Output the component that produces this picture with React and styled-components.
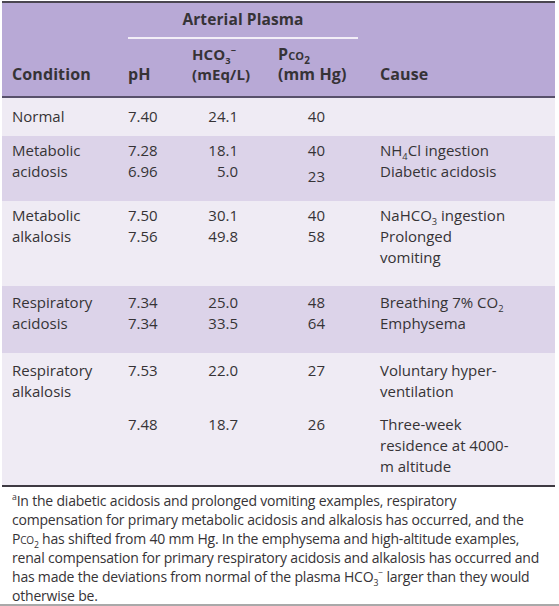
import React from 'react';
import styled, { createGlobalStyle } from 'styled-components';

const rows = [
    {
        label: ['Normal'],
        tone: 'light',
        pad: [8, 9],
        items: [{ ph: '7.40', hco: '24.1', pco: '40', cause: null }],
    },
    {
        label: ['Metabolic', 'acidosis'],
        tone: 'mid',
        pad: [4, 14],
        items: [
            { ph: '7.28', hco: '18.1', pco: '40', cause: <>NH<sub>4</sub>Cl ingestion</> },
            { ph: '6.96', hco: '5.0', pco: '23', drop: true, cause: 'Diabetic acidosis' },
        ],
    },
    {
        label: ['Metabolic', 'alkalosis'],
        tone: 'light',
        pad: [4, 18],
        items: [
            { ph: '7.50', hco: '30.1', pco: '40', cause: <>NaHCO<sub>3</sub> ingestion</> },
            { ph: '7.56', hco: '49.8', pco: '58', cause: <>Prolonged<br />vomiting</> },
        ],
    },
    {
        label: ['Respiratory', 'acidosis'],
        tone: 'mid',
        pad: [6, 19],
        items: [
            { ph: '7.34', hco: '25.0', pco: '48', cause: <>Breathing 7% CO<sub>2</sub></> },
            { ph: '7.34', hco: '33.5', pco: '64', cause: 'Emphysema' },
        ],
    },
    {
        label: ['Respiratory', 'alkalosis'],
        tone: 'light',
        pad: [7, 8],
        items: [
            { ph: '7.53', hco: '22.0', pco: '27', cause: <>Voluntary hyper-<br />ventilation</> },
            { ph: '7.48', hco: '18.7', pco: '26', spaced: true, cause: <>Three-week<br />residence at 4000-<br />m altitude</> },
        ],
    },
];

function App() {
    return (
        <>
            <Global />
            <Page>
                <Table>
                    <Head>
                        <Span>Arterial Plasma</Span>
                        <HeadCell $col={1}>Condition</HeadCell>
                        <HeadCell $col={2}>pH</HeadCell>
                        <HeadCell $col={3}>
                            HCO<sub>3</sub><sup>−</sup><br />(mEq/L)
                        </HeadCell>
                        <HeadCell $col={4}>
                            P<Sc>co</Sc><sub>2</sub><br />(mm Hg)
                        </HeadCell>
                        <HeadCell $col={5}>Cause</HeadCell>
                    </Head>
                    {rows.map((group, gi) => (
                        <Group key={gi} $tone={group.tone} $pad={group.pad}>
                            <Condition style={{ gridRow: `1 / span ${group.items.length}` }}>
                                {group.label.map((l, i) => <div key={i}>{l}</div>)}
                            </Condition>
                            {group.items.map((it, i) => (
                                <React.Fragment key={i}>
                                    <Ph $spaced={it.spaced}>{it.ph}</Ph>
                                    <Hco $spaced={it.spaced}>{it.hco}</Hco>
                                    <Pco $spaced={it.spaced} $drop={it.drop}>{it.pco}</Pco>
                                    <Cause $spaced={it.spaced}>{it.cause}</Cause>
                                </React.Fragment>
                            ))}
                        </Group>
                    ))}
                </Table>
                <Note>
                    <sup>a</sup>In the diabetic acidosis and prolonged vomiting examples, respiratory
                    compensation for primary metabolic acidosis and alkalosis has occurred, and the
                    P<Sc>co</Sc><sub>2</sub> has shifted from 40 mm Hg. In the emphysema and high-altitude examples,
                    renal compensation for primary respiratory acidosis and alkalosis has occurred and
                    has made the deviations from normal of the plasma HCO<sub>3</sub><sup>−</sup> larger than they would
                    otherwise be.
                </Note>
            </Page>
        </>
    );
}

const Global = createGlobalStyle`
    body {
        margin: 0;
        background: #fff;
        font-family: "Open Sans", "Noto Sans", sans-serif;
        color: #363336;
    }
    sub, sup {
        font-size: 0.62em;
        line-height: 0;
    }
`;

const Page = styled.div`
    width: 559px;
    height: 606px;
    box-sizing: border-box;
    padding: 0 4px 0 2px;
    border-bottom: 2px solid #a9a9a9;
    overflow: hidden;
`;

const Table = styled.div`
    border-top: 2px solid #4a4650;
    border-bottom: 2px solid #3e3a42;
    margin-top: 1px;
`;

const cols = '126px 64px 86px 102px 1fr';

const Head = styled.div`
    display: grid;
    grid-template-columns: ${cols};
    grid-template-rows: 36px auto;
    align-items: end;
    background: #b8a9d6;
    border-bottom: 2px solid #57506a;
    padding-bottom: 12px;
    font-weight: 700;
    font-size: 16px;
    line-height: 20px;
    letter-spacing: 0.1px;
`;

const Span = styled.div`
    grid-column: 2 / span 3;
    grid-row: 1;
    margin-right: 22px;
    align-self: stretch;
    text-align: center;
    padding-top: 6px;
    font-size: 15.5px;
    border-bottom: 2px solid #f2eef7;
`;

const HeadCell = styled.div`
    grid-column: ${p => p.$col};
    grid-row: 2;
    padding-top: 5px;
    padding-left: ${p => (p.$col === 1 ? '10px' : '0')};
    font-size: ${p => (p.$col === 3 ? '15px' : '16px')};
`;

const Sc = styled.span`
    font-variant: small-caps;
`;

const Group = styled.div`
    display: grid;
    grid-template-columns: ${cols};
    align-items: start;
    background: ${p => (p.$tone === 'mid' ? '#dcd3e9' : '#efebf4')};
    padding: ${p => p.$pad[0]}px 0 ${p => p.$pad[1]}px;
    font-size: 15px;
    line-height: 21px;
`;

const Condition = styled.div`
    grid-column: 1;
    padding-left: 10px;
`;

const Cell = styled.div`
    margin-top: ${p => (p.$spaced ? '12px' : '0')};
`;

const Ph = styled(Cell)`
    grid-column: 2;
`;

const Hco = styled(Cell)`
    grid-column: 3;
    text-align: right;
    padding-right: 40px;
`;

const Pco = styled(Cell)`
    grid-column: 4;
    text-align: right;
    padding-right: 55px;
    padding-top: ${p => (p.$drop ? '5px' : '0')};
`;

const Cause = styled(Cell)`
    grid-column: 5;
`;

const Note = styled.p`
    margin: 0;
    padding: 4px 6px 0 10px;
    font-size: 14px;
    line-height: 19px;
    letter-spacing: -0.2px;
`;

export default App;
